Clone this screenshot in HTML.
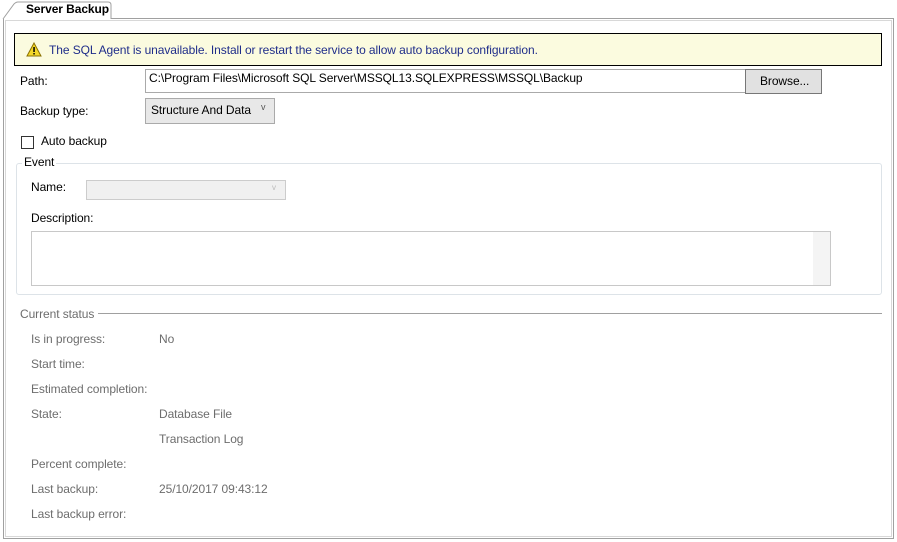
<!DOCTYPE html><html><head><style>
body{margin:0;width:897px;height:542px;background:#fff;font-family:"Liberation Sans",sans-serif;font-size:12px;letter-spacing:-0.08px;color:#000;position:relative;overflow:hidden}
div,span{position:absolute;box-sizing:border-box}
.g{color:#6d6d6d}
</style></head><body>
<div style="left:3px;top:18px;width:891px;height:521px;border:1px solid #a0a0a0;box-shadow:inset 0 0 0 1px #fff, inset 0 0 0 2px #d8d8d8"></div>
<svg style="position:absolute;left:0;top:0" width="120" height="20"><path d="M3 19 L14 4 Q16 2 18 2 L108 2 Q111 2 111 5 L111 19" fill="#fff" stroke="#a0a0a0"/></svg>
<span style="left:26px;top:2px;font-weight:bold">Server Backup</span>
<div style="left:14px;top:33px;width:868px;height:33px;background:#fbfbdf;border:1px solid #000"></div>
<svg style="position:absolute;left:26px;top:42px" width="16" height="15"><path d="M8 1 L15 14 L1 14 Z" fill="#f4d82a" stroke="#8a7000" stroke-width="1"/><rect x="7.3" y="5" width="1.5" height="5" fill="#000"/><rect x="7.3" y="11" width="1.5" height="1.5" fill="#000"/></svg>
<span style="left:49px;top:43px;color:#1f2d8a">The SQL Agent is unavailable. Install or restart the service to allow auto backup configuration.</span>
<span style="left:20px;top:74px">Path:</span>
<div style="left:145px;top:69px;width:601px;height:24px;border:1px solid #aaa"></div>
<span style="left:149px;top:71px">C:\Program Files\Microsoft SQL Server\MSSQL13.SQLEXPRESS\MSSQL\Backup</span>
<div style="left:745px;top:69px;width:77px;height:25px;background:#e1e1e1;border:1px solid #777"></div>
<span style="left:760px;top:74px">Browse...</span>
<span style="left:20px;top:104px">Backup type:</span>
<div style="left:145px;top:98px;width:130px;height:26px;background:#e8e8e8;border:1px solid #aaa"></div>
<span style="left:151px;top:103px">Structure And Data</span>
<span style="left:261px;top:102px;font-size:9px;color:#555">v</span>
<div style="left:21px;top:136px;width:13px;height:13px;border:1px solid #333"></div>
<span style="left:41px;top:134px">Auto backup</span>
<div style="left:16px;top:163px;width:866px;height:132px;border:1px solid #dde3e8;border-radius:3px"></div>
<span style="left:22px;top:155px;background:#fff;padding:0 2px">Event</span>
<span style="left:31px;top:180px">Name:</span>
<div style="left:86px;top:180px;width:200px;height:20px;background:#f0f0f0;border:1px solid #ccc"></div>
<span style="left:272px;top:183px;font-size:8px;color:#bbb">v</span>
<span style="left:31px;top:211px">Description:</span>
<div style="left:31px;top:231px;width:800px;height:55px;border:1px solid #c8c8c8"></div>
<div style="left:813px;top:232px;width:17px;height:53px;background:#f4f4f4"></div>
<span style="left:20px;top:307px" class="g">Current status</span>
<div style="left:98px;top:313px;width:784px;height:1px;background:#a0a0a0"></div>
<span class="g" style="left:31px;top:332px">Is in progress:</span><span class="g" style="left:159px;top:332px">No</span>
<span class="g" style="left:31px;top:357px">Start time:</span>
<span class="g" style="left:31px;top:382px">Estimated completion:</span>
<span class="g" style="left:31px;top:407px">State:</span><span class="g" style="left:159px;top:407px">Database File</span>
<span class="g" style="left:159px;top:432px">Transaction Log</span>
<span class="g" style="left:31px;top:457px">Percent complete:</span>
<span class="g" style="left:31px;top:482px">Last backup:</span><span class="g" style="left:159px;top:482px">25/10/2017 09:43:12</span>
<span class="g" style="left:31px;top:507px">Last backup error:</span>
</body></html>
